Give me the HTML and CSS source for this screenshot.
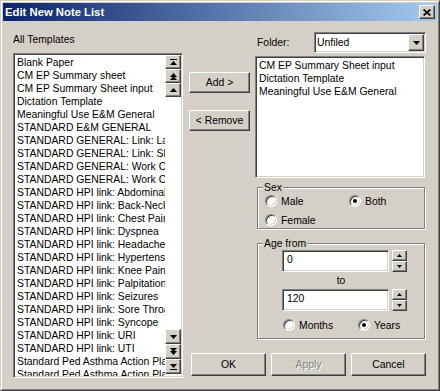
FILE: index.html
```html
<!DOCTYPE html>
<html lang="en">

<head>
    <meta charset="UTF-8">
    <meta name="viewport" content="width=device-width, initial-scale=1.0">
    <title>Edit New Note List</title>
    <link rel="stylesheet" href="styles.css">
</head>

<body>
    <div class="window">
        <!-- Title bar -->
        <div class="titlebar">
            <span class="title">Edit New Note List</span>
            <span class="close-btn raised">
                <svg width="8" height="7" viewBox="0 0 8 7"><path d="M0.6 0.5l6.8 6M7.4 0.5l-6.8 6" stroke="#000" stroke-width="1.7"/></svg>
            </span>
        </div>

        <div class="content">
            <!-- All templates -->
            <div class="col-left">
                <div class="label">All Templates</div>
                <div class="listbox templates">
                    <ul class="items">
                        <li>Blank Paper</li>
                        <li>CM EP Summary sheet</li>
                        <li>CM EP Summary Sheet input</li>
                        <li>Dictation Template</li>
                        <li>Meaningful Use E&amp;M General</li>
                        <li>STANDARD E&amp;M GENERAL</li>
                        <li>STANDARD GENERAL: Link: Laceration</li>
                        <li>STANDARD GENERAL: Link: Skin</li>
                        <li>STANDARD GENERAL: Work Comp</li>
                        <li>STANDARD GENERAL: Work Comp Visit</li>
                        <li>STANDARD HPI link: Abdominal Pain</li>
                        <li>STANDARD HPI link: Back-Neck Pain</li>
                        <li>STANDARD HPI link: Chest Pain</li>
                        <li>STANDARD HPI link: Dyspnea</li>
                        <li>STANDARD HPI link: Headache</li>
                        <li>STANDARD HPI link: Hypertension</li>
                        <li>STANDARD HPI link: Knee Pain</li>
                        <li>STANDARD HPI link: Palpitations</li>
                        <li>STANDARD HPI link: Seizures</li>
                        <li>STANDARD HPI link: Sore Throat</li>
                        <li>STANDARD HPI link: Syncope</li>
                        <li>STANDARD HPI link: URI</li>
                        <li>STANDARD HPI link: UTI</li>
                        <li>Standard Ped Asthma Action Plan</li>
                        <li>Standard Ped Asthma Action Plan 2</li>
                    </ul>
                    <div class="scroll">
                        <div class="scroll-group">
                            <span class="sbtn raised"><svg width="7" height="6" viewBox="0 0 7 6"><path d="M0 0h7v1H0zM3.5 2L7 6H0z"/></svg></span>
                            <span class="sbtn raised"><svg width="7" height="7" viewBox="0 0 7 7"><path d="M3.5 0L7 4H0zM3.5 3L7 7H0z"/></svg></span>
                            <span class="sbtn raised"><svg width="7" height="4" viewBox="0 0 7 4"><path d="M3.5 0L7 4H0z"/></svg></span>
                        </div>
                        <div class="scroll-group bottom">
                            <span class="sbtn raised"><svg width="7" height="4" viewBox="0 0 7 4"><path d="M0 0h7L3.5 4z"/></svg></span>
                            <span class="sbtn raised"><svg width="7" height="7" viewBox="0 0 7 7"><path d="M0 0h7L3.5 4zM0 3h7L3.5 7z"/></svg></span>
                            <span class="sbtn raised"><svg width="7" height="6" viewBox="0 0 7 6"><path d="M0 0h7L3.5 4zM0 5h7v1H0z"/></svg></span>
                        </div>
                    </div>
                </div>
            </div>

            <div class="col-right">
                <div class="folder-row">
                    <span class="folder-label">Folder:</span>
                    <div class="combo">
                        <span class="combo-text">Unfiled</span>
                        <span class="combo-btn raised"><svg width="7" height="4" viewBox="0 0 7 4"><path d="M0 0h7L3.5 4z"/></svg></span>
                    </div>
                </div>

                <div class="list-row">
                    <div class="move-btns">
                        <button class="btn add">Add &gt;</button>
                        <button class="btn remove">&lt; Remove</button>
                    </div>
                    <div class="listbox selected">
                        <ul class="items">
                            <li>CM EP Summary Sheet input</li>
                            <li>Dictation Template</li>
                            <li>Meaningful Use E&amp;M General</li>
                        </ul>
                    </div>
                </div>

                <fieldset class="group sex">
                    <legend>Sex</legend>
                    <div class="sex-grid">
                        <label class="opt"><span class="radio"></span>Male</label>
                        <label class="opt"><span class="radio on"></span>Both</label>
                        <label class="opt"><span class="radio"></span>Female</label>
                    </div>
                </fieldset>

                <fieldset class="group age">
                    <legend>Age from</legend>
                    <div class="spin-row">
                        <div class="field">0</div>
                        <div class="spin">
                            <span class="spin-btn raised"><svg width="5" height="3" viewBox="0 0 5 3"><path d="M2.5 0L5 3H0z"/></svg></span>
                            <span class="spin-btn raised"><svg width="5" height="3" viewBox="0 0 5 3"><path d="M0 0h5L2.5 3z"/></svg></span>
                        </div>
                    </div>
                    <div class="to">to</div>
                    <div class="spin-row">
                        <div class="field">120</div>
                        <div class="spin">
                            <span class="spin-btn raised"><svg width="5" height="3" viewBox="0 0 5 3"><path d="M2.5 0L5 3H0z"/></svg></span>
                            <span class="spin-btn raised"><svg width="5" height="3" viewBox="0 0 5 3"><path d="M0 0h5L2.5 3z"/></svg></span>
                        </div>
                    </div>
                    <div class="unit-row">
                        <label class="opt"><span class="radio"></span>Months</label>
                        <label class="opt"><span class="radio on"></span>Years</label>
                    </div>
                </fieldset>

                <div class="dialog-btns">
                    <button class="btn wide">OK</button>
                    <button class="btn wide disabled">Apply</button>
                    <button class="btn wide">Cancel</button>
                </div>
            </div>
        </div>
    </div>
</body>

</html>
```

FILE: styles.css
```css
* {
    box-sizing: border-box;
}

body {
    margin: 0;
    background: #d4d0c8;
    font-family: "Liberation Sans", Arial, sans-serif;
    font-size: 10.4px;
    color: #000;
}

.window {
    width: 440px;
    height: 391px;
    padding: 2px;
    border: 1px solid;
    border-color: #d4d0c8 #404040 #404040 #d4d0c8;
    box-shadow: inset 1px 1px #fff, inset -1px -1px #808080;
}

/* 3D bevels */
.raised {
    display: flex;
    align-items: center;
    justify-content: center;
    background: #d4d0c8;
    border: 1px solid;
    border-color: #fff #404040 #404040 #fff;
    box-shadow: inset -1px -1px #808080;
}

.titlebar {
    display: flex;
    align-items: center;
    justify-content: space-between;
    height: 18px;
    padding: 0 2px;
    background: linear-gradient(to right, #0a246a, #a6caf0);
}

.title {
    color: #fff;
    font-weight: bold;
    font-size: 11.3px;
}

.close-btn {
    width: 16px;
    height: 14px;
}

.content {
    display: flex;
    gap: 6px;
    padding: 11px 0 0 10px;
}

.col-left {
    width: 170px;
}

.label {
    margin-top: 1px;
    line-height: 13px;
}

.listbox {
    display: flex;
    padding: 1px;
    background: #fff;
    border: 1px solid;
    border-color: #808080 #fff #fff #808080;
    box-shadow: inset 1px 1px #404040, inset -1px -1px #d4d0c8;
}

.templates {
    height: 325px;
    margin-top: 7px;
}

.items {
    flex: 1;
    margin: 0;
    padding: 1px 0 0 2px;
    list-style: none;
    overflow: hidden;
    white-space: nowrap;
    line-height: 13px;
}

.scroll {
    width: 16px;
    display: flex;
    flex-direction: column;
    justify-content: space-between;
    padding-bottom: 2px;
}

.sbtn {
    width: 16px;
    height: 14px;
}

.scroll-group.bottom .sbtn {
    height: 15px;
}

.col-right {
    width: 237px;
}

.folder-row {
    display: flex;
    align-items: center;
    height: 21px;
    padding-left: 68px;
}

.folder-label {
    width: 57px;
}

.combo {
    display: flex;
    width: 112px;
    height: 21px;
    padding: 1px;
    background: #fff;
    border: 1px solid;
    border-color: #808080 #fff #fff #808080;
    box-shadow: inset 1px 1px #404040, inset -1px -1px #d4d0c8;
}

.combo-text {
    flex: 1;
    padding-left: 1px;
    line-height: 17px;
}

.combo-btn {
    width: 16px;
    height: 17px;
}

.list-row {
    display: flex;
    gap: 5px;
    margin-top: 3px;
}

.move-btns {
    display: flex;
    flex-direction: column;
    width: 61px;
}

.btn {
    font: inherit;
    color: #000;
    padding: 0;
    background: #d4d0c8;
    border: 1px solid;
    border-color: #fff #404040 #404040 #fff;
    box-shadow: inset -1px -1px #808080;
}

.btn.add,
.btn.remove {
    height: 21px;
}

.btn.add {
    margin-top: 16px;
}

.btn.remove {
    margin-top: 17px;
}

.selected {
    width: 170px;
    height: 122px;
}

/* group boxes */
.group {
    width: 168px;
    min-width: 0;
    margin: 3px 0 0 68px;
    padding: 0;
    border: 1px solid #808080;
    box-shadow: inset 1px 1px #fff, 1px 1px #fff;
}

.group legend {
    margin-left: 5px;
    padding: 0 1px;
    line-height: 13px;
    background: #d4d0c8;
}

.group.age {
    margin-top: 8px;
}

.sex-grid {
    display: grid;
    grid-template-columns: 84px auto;
    grid-auto-rows: 14px;
    row-gap: 5px;
    padding: 0 0 1px 7px;
}

.opt {
    display: flex;
    align-items: center;
    gap: 4px;
}

.radio {
    position: relative;
    width: 12px;
    height: 12px;
    border-radius: 50%;
    background: #fff;
    border: 1px solid;
    border-color: #808080 #fff #fff #808080;
    box-shadow: inset 1px 1px #404040, inset -1px -1px #d4d0c8;
}

.radio.on::after {
    content: "";
    position: absolute;
    left: 3px;
    top: 3px;
    width: 4px;
    height: 4px;
    border-radius: 50%;
    background: #000;
}

.spin-row {
    display: flex;
    padding-left: 24px;
}

.field {
    width: 107px;
    height: 22px;
    padding-left: 4px;
    line-height: 18px;
    background: #fff;
    border: 1px solid;
    border-color: #808080 #fff #fff #808080;
    box-shadow: inset 1px 1px #404040, inset -1px -1px #d4d0c8;
}

.spin {
    display: flex;
    flex-direction: column;
    width: 15px;
    margin-left: 3px;
}

.spin-btn {
    height: 11px;
}

.to {
    line-height: 17px;
    text-align: center;
}

.unit-row {
    display: grid;
    grid-template-columns: 75px auto;
    height: 14px;
    margin: 7px 0 6px;
    padding-left: 25px;
}

.dialog-btns {
    display: flex;
    justify-content: flex-end;
    gap: 5px;
    margin-top: 14px;
}

.btn.wide {
    width: 75px;
    height: 23px;
}

.btn.disabled {
    color: #808080;
    text-shadow: 1px 1px #fff;
}
```
